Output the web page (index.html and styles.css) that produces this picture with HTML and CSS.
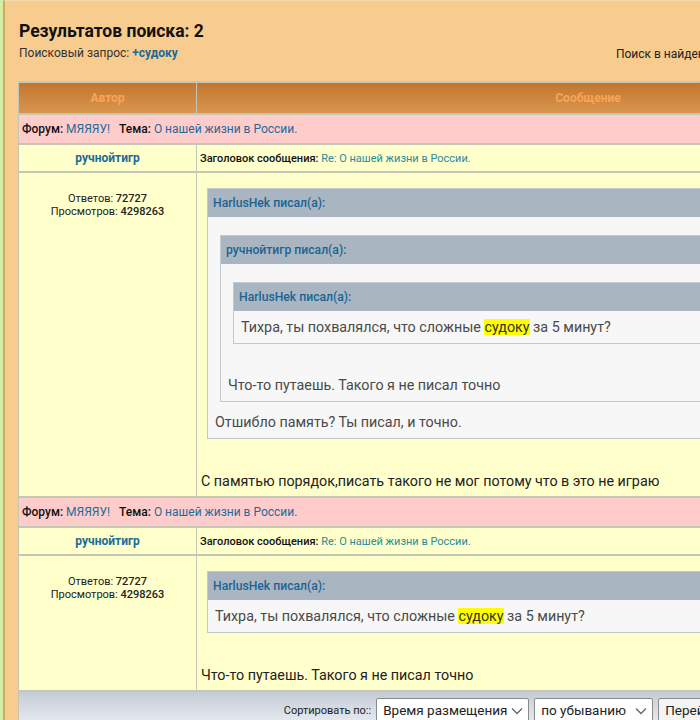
FILE: index.html
```html
<!DOCTYPE html>
<html lang="ru">
<head>
<meta charset="utf-8">
<title>Результатов поиска: 2</title>
<link rel="stylesheet" href="styles.css">
</head>
<body>
<div class="page">
  <div class="top">
    <div class="top-left">
      <h1 class="title">Результатов поиска: 2</h1>
      <div class="query">Поисковый запрос: <a class="qlink" href="#">+судоку</a></div>
    </div>
    <div class="top-right">Поиск в найденном: <span class="sbox"></span> <span class="sbtn">Перейти</span></div>
  </div>

  <table class="results">
    <colgroup><col class="c-author"><col class="c-msg"></colgroup>
    <tr class="thead">
      <th>Автор</th>
      <th>Сообщение</th>
    </tr>

    <tr class="forum-row">
      <td colspan="2"><b>Форум:</b> <a href="#">МЯЯЯУ!</a> &nbsp; <b>Тема:</b> <a href="#">О нашей жизни в России.</a></td>
    </tr>
    <tr class="author-row">
      <td class="author"><a href="#">ручнойтигр</a></td>
      <td class="subject"><b>Заголовок сообщения:</b> <a href="#">Re: О нашей жизни в России.</a></td>
    </tr>
    <tr class="body-row">
      <td class="stats">Ответов: <b>72727</b><br>Просмотров: <b>4298263</b></td>
      <td class="msg">
        <div class="quote">
          <div class="qh">HarlusHek писал(а):</div>
          <div class="qb">
            <div class="quote nested">
              <div class="qh">ручнойтигр писал(а):</div>
              <div class="qb">
                <div class="quote nested">
                  <div class="qh">HarlusHek писал(а):</div>
                  <div class="qb">Тихра, ты похвалялся, что сложные <span class="hl">судоку</span> за 5 минут?</div>
                </div>
                <div class="after far">Что-то путаешь. Такого я не писал точно</div>
              </div>
            </div>
            <div class="after near">Отшибло память? Ты писал, и точно.</div>
          </div>
        </div>
        <div class="post far">С памятью порядок,писать такого не мог потому что в это не играю</div>
      </td>
    </tr>

    <tr class="forum-row">
      <td colspan="2"><b>Форум:</b> <a href="#">МЯЯЯУ!</a> &nbsp; <b>Тема:</b> <a href="#">О нашей жизни в России.</a></td>
    </tr>
    <tr class="author-row">
      <td class="author"><a href="#">ручнойтигр</a></td>
      <td class="subject"><b>Заголовок сообщения:</b> <a href="#">Re: О нашей жизни в России.</a></td>
    </tr>
    <tr class="body-row">
      <td class="stats">Ответов: <b>72727</b><br>Просмотров: <b>4298263</b></td>
      <td class="msg">
        <div class="quote">
          <div class="qh">HarlusHek писал(а):</div>
          <div class="qb">Тихра, ты похвалялся, что сложные <span class="hl">судоку</span> за 5 минут?</div>
        </div>
        <div class="post far">Что-то путаешь. Такого я не писал точно</div>
      </td>
    </tr>

    <tr class="foot">
      <td colspan="2">
        <div class="sort">
          <span class="sort-label">Сортировать по::</span>
          <span class="sel w1">Время размещения<svg class="chev" width="12" height="8" viewBox="0 0 12 8"><path d="M1 1.5 L6 6.5 L11 1.5" fill="none" stroke="#666" stroke-width="1.3"/></svg></span>
          <span class="sel w2">по убыванию<svg class="chev" width="12" height="8" viewBox="0 0 12 8"><path d="M1 1.5 L6 6.5 L11 1.5" fill="none" stroke="#666" stroke-width="1.3"/></svg></span>
          <span class="btn">Перейти</span>
        </div>
      </td>
    </tr>
  </table>
</div>
</body>
</html>
```

FILE: styles.css
```css
html, body {
  margin: 0;
  padding: 0;
}
body {
  background: #d6eca2;
  font-family: Roboto, "Liberation Sans", sans-serif;
  overflow: hidden;
  width: 700px;
  height: 720px;
}
.page {
  margin-left: 3px;
  border-left: 2px solid #c9ad5e;
  border-top: 1px solid #f2d9a8;
  background: #f7cc8e;
  width: 1000px;
  min-height: 740px;
  padding-left: 13px;
  box-sizing: border-box;
}
.top {
  width: 962px;
  display: flex;
  justify-content: space-between;
  align-items: flex-end;
  padding: 19px 0 0 1px;
  box-sizing: border-box;
}
.title {
  margin: 0;
  font-size: 17.5px;
  line-height: 22px;
  font-weight: bold;
  color: #111;
}
.query {
  margin-top: 3px;
  font-size: 12px;
  line-height: 16px;
  color: #333;
}
.qlink {
  color: #1d6b98;
  font-weight: bold;
  text-decoration: none;
}
.top-right {
  font-size: 12px;
  line-height: 16px;
  color: #222;
  margin-bottom: -3px;
  display: flex;
  align-items: center;
  gap: 4px;
}
.sbox {
  display: inline-block;
  width: 178px;
  height: 18px;
  background: #fff;
  border: 1px solid #999;
}
.sbtn {
  display: inline-block;
  padding: 1px 6px;
  border: 1px solid #999;
  background: #eee;
}

.results {
  margin-top: 20px;
  width: 962px;
  border-collapse: separate;
  border-spacing: 1px 2px;
  background: #c6c6b4;
  table-layout: fixed;
}
.c-author { width: 177px; }
.results a {
  color: #1d6b98;
  text-decoration: none;
}
.thead th {
  height: 30px;
  padding: 0;
  font-size: 12px;
  font-weight: bold;
  color: #fba455;
  background: linear-gradient(#c17630, #d9964f);
}
.forum-row td {
  background: #ffcccc;
  height: 28px;
  padding: 0 0 0 3px;
  font-size: 12px;
  color: #111;
}
.forum-row b {
  font-weight: 500;
}
.author-row td {
  background: #ffffcc;
  height: 26px;
  padding: 0;
}
.author {
  text-align: center;
  font-size: 12px;
  font-weight: bold;
}
.subject {
  font-size: 11px;
  color: #111;
  padding-left: 3px !important;
}
.subject b {
  font-weight: 500;
}
.subject a {
  color: #2a8a9a !important;
}
.body-row td {
  background: #ffffcc;
  vertical-align: top;
}
.stats {
  text-align: center;
  font-size: 11px;
  line-height: 13px;
  color: #222;
  padding: 19px 0 0;
}
.stats b {
  font-weight: 500;
}
.msg {
  padding: 15px 0 7px 4px;
}
.quote {
  margin-left: 6px;
  border: 1px solid #c2c8ce;
  background: #f7f7f7;
}
.quote.nested {
  margin: 10px 0 0 5px;
}
.qh {
  height: 28px;
  line-height: 28px;
  padding-left: 5px;
  background: #a9b5c1;
  font-size: 12.2px;
  font-weight: 500;
  color: #1a6494;
}
.qb {
  padding: 8px 7px;
  font-size: 14.3px;
  line-height: 16px;
  color: #4a4a4a;
}
.after.far { margin-top: 33px; }
.after.near { margin-top: 12px; }
.post {
  font-size: 14.3px;
  line-height: 16px;
  color: #222;
}
.post.far { margin-top: 34px; }
.hl {
  background: #ffff00;
  color: #333;
}

.foot td {
  height: 30px;
  padding: 0;
  background: linear-gradient(#c3ccd6, #e6eaef);
}
.sort {
  display: flex;
  justify-content: center;
  align-items: center;
  gap: 5px;
  padding-top: 6px;
}
.sort-label {
  font-size: 11px;
  color: #222;
}
.sel, .btn {
  position: relative;
  box-sizing: border-box;
  height: 24px;
  line-height: 22px;
  font-size: 13.5px;
  color: #222;
  background: #fff;
  border: 1px solid #8a8a8a;
  padding: 0 6px;
  border-radius: 2px;
}
.sel.w1 { width: 153px; }
.sel.w2 { width: 119px; }
.chev {
  position: absolute;
  right: 5px;
  top: 8px;
}
.btn {
  width: 56px;
  background: #f4f4f4;
}
```
